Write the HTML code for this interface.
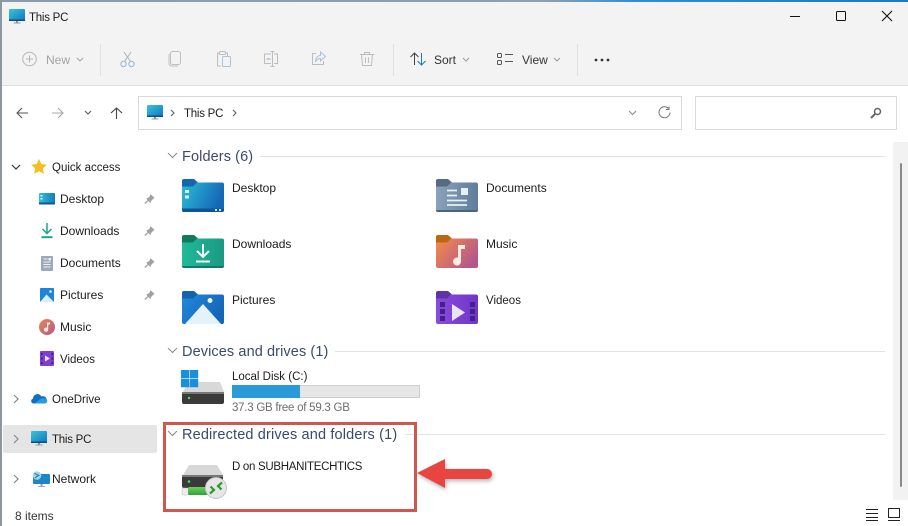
<!DOCTYPE html>
<html><head><meta charset="utf-8">
<style>
html,body{margin:0;padding:0}
body{width:908px;height:526px;position:relative;overflow:hidden;background:#fff;font-family:"Liberation Sans",sans-serif;color:#1c1c1c}
.t{position:absolute;white-space:nowrap;font-size:12px;line-height:14px}
.n{font-size:11.5px;letter-spacing:-.25px}
.h{position:absolute;white-space:nowrap;font-size:14.5px;line-height:16px;letter-spacing:.1px;color:#3a4a6b}
.l{position:absolute;height:1px;background:#e3e3e3}
svg{position:absolute;overflow:visible}
</style></head><body>
<div style="position:absolute;left:0;top:0;width:908px;height:85px;background:#f3f3f3"></div>
<div style="position:absolute;left:0;top:85px;width:908px;height:1px;background:#dedede"></div>
<div style="position:absolute;left:0;top:0;width:908px;height:2px;background:linear-gradient(90deg,#8a9bab 0,#8fa0b0 60%,#2f8fd0 70%,#1b78c8 100%)"></div>
<div style="position:absolute;left:0;top:0;width:1.5px;height:526px;background:#8f979e"></div>

<svg width="0" height="0" style="left:0;top:0"><defs>
<linearGradient id="m" x1="0" y1="0" x2="1" y2="1"><stop offset="0" stop-color="#38c6d8"/><stop offset="1" stop-color="#1275c4"/></linearGradient>
<linearGradient id="d" x1="0" y1="0" x2="1" y2="0"><stop offset="0" stop-color="#35c0d4"/><stop offset="1" stop-color="#157ac0"/></linearGradient>
<linearGradient id="mu" x1="0" y1="0" x2="1" y2="1"><stop offset="0" stop-color="#e8855a"/><stop offset="1" stop-color="#b25a80"/></linearGradient>
<linearGradient id="f1" x1="0" y1="0" x2="1" y2="0.300"><stop offset="0" stop-color="#2bbdd4"/><stop offset="1" stop-color="#1567b8"/></linearGradient>
<linearGradient id="f2" x1="0" y1="0" x2="1" y2="0"><stop offset="0" stop-color="#20ba9a"/><stop offset="1" stop-color="#1a9a82"/></linearGradient>
<linearGradient id="f3" x1="0" y1="0" x2="1" y2="0.500"><stop offset="0" stop-color="#2389da"/><stop offset="1" stop-color="#1566b6"/></linearGradient>
<linearGradient id="f4" x1="0" y1="0" x2="1" y2="0"><stop offset="0" stop-color="#8aa2ba"/><stop offset="1" stop-color="#5f7d9c"/></linearGradient>
<linearGradient id="f5" x1="0" y1="0" x2="1" y2="0.600"><stop offset="0" stop-color="#f58c48"/><stop offset="1" stop-color="#b4588a"/></linearGradient>
<linearGradient id="f6" x1="0" y1="0" x2="1" y2="0"><stop offset="0" stop-color="#8a4bdc"/><stop offset="1" stop-color="#6f36c8"/></linearGradient>
<linearGradient id="gr" x1="0" y1="0" x2="0" y2="1"><stop offset="0" stop-color="#6fd05a"/><stop offset="1" stop-color="#2fa03a"/></linearGradient>
</defs></svg>

<!-- title -->
<svg style="left:9px;top:9px" width="16" height="15" viewBox="0 0 16 15"><rect width="16" height="11.500" rx="1" fill="url(#m)"/><rect y="10.500" width="16" height="1.500" fill="#0b4f80"/><rect x="7" y="12" width="2" height="2" fill="#888"/><rect x="4.500" y="13.500" width="7" height="1" fill="#999"/></svg>
<div class="t n" style="left:29px;top:11px">This PC</div>
<svg style="left:790px;top:8px" width="106" height="16" fill="none" stroke="#111" stroke-width="1"><path d="M0 8.500h10"/><rect x="46.500" y="3.500" width="9" height="9" rx="1"/><path d="M92 3l10 10M102 3l-10 10" stroke-width="1.100"/></svg>

<!-- toolbar -->
<svg style="left:22px;top:52px" width="15" height="15" fill="none" stroke="#b5b5b5"><circle cx="7.500" cy="7" r="6.800"/><path d="M7.500 3.500v7M4 7h7"/></svg>
<div class="t" style="left:46px;top:53px;color:#a3a3a3">New</div>
<svg style="left:76px;top:57px" width="8" height="5" fill="none" stroke="#a5a5a5"><path d="M1 1l3 3 3-3"/></svg>
<div style="position:absolute;left:100px;top:44px;width:1px;height:32px;background:#e2e2e2"></div>
<svg style="left:120px;top:51px" width="15" height="17" fill="none" stroke="#8fb6d8"><circle cx="3.500" cy="13" r="2.700"/><circle cx="11.500" cy="13" r="2.700"/><path d="M4.500 10.500L11 1M10.500 10.500L4 1" stroke="#a8b4be"/></svg>
<svg style="left:168px;top:51px" width="14" height="16" fill="none" stroke="#c0c0c0"><rect x="2.500" y="0.500" width="10" height="13" rx="2"/><path d="M1 3v9c0 2 1 3 3 3h6"/></svg>
<svg style="left:216px;top:51px" width="15" height="16" fill="none" stroke="#bdbdbd"><path d="M4 2H1.500v13H5"/><path d="M9 2h2.500v3"/><rect x="3.500" y="0.500" width="6" height="3" rx="1"/><rect x="6.500" y="5.500" width="8" height="10" rx="1" stroke="#a9c3d8"/></svg>
<svg style="left:263px;top:51px" width="16" height="16" fill="none" stroke="#bdbdbd"><path d="M8 3H1.500v9.500H8M11 3h3.500v9.500H11"/><path d="M9.500 0.500v15M7.500 0.500h4M7.500 15.500h4"/><path d="M3.500 8h4" stroke="#a9c3d8" stroke-width="1.500"/></svg>
<svg style="left:311px;top:51px" width="16" height="16" fill="none" stroke="#bdbdbd"><path d="M5 2.500H1.500v11h11V10"/><path d="M9.500 1l5 4.500-5 4.500V7.500C7 7.500 5.500 8.500 4.500 11c0-4 2-6.500 5-6.500z" stroke="#a9c3d8"/></svg>
<svg style="left:360px;top:51px" width="14" height="16" fill="none" stroke="#bdbdbd"><path d="M0 3.500h14M4.500 3V1.500h5V3M1.500 3.500l1 11h9l1-11M5.500 6.500v5.500M8.500 6.500v5.500"/></svg>
<div style="position:absolute;left:393px;top:44px;width:1px;height:32px;background:#e2e2e2"></div>
<svg style="left:410px;top:52px" width="17" height="14" fill="none" stroke="#444"><path d="M4.500 13V1M0.500 5l4-4 4 4"/><path d="M11.500 1v12M7.500 9l4 4 4-4" stroke="#1578c2"/></svg>
<div class="t" style="left:434px;top:53px;color:#333">Sort</div>
<svg style="left:462px;top:57px" width="8" height="5" fill="none" stroke="#999"><path d="M1 1l3 3 3-3"/></svg>
<svg style="left:497px;top:53px" width="17" height="12" fill="none" stroke="#555"><rect x="0.500" y="0.500" width="4" height="4" rx="1"/><rect x="0.500" y="7.500" width="4" height="4" rx="1"/><path d="M8 1.500h8M8 8.500h8"/></svg>
<div class="t" style="left:522px;top:53px;color:#333">View</div>
<svg style="left:553px;top:57px" width="8" height="5" fill="none" stroke="#999"><path d="M1 1l3 3 3-3"/></svg>
<div style="position:absolute;left:577px;top:44px;width:1px;height:32px;background:#e2e2e2"></div>
<svg style="left:594px;top:58px" width="16" height="4" fill="#333"><circle cx="2" cy="2" r="1.400"/><circle cx="8" cy="2" r="1.400"/><circle cx="14" cy="2" r="1.400"/></svg>

<!-- nav -->
<svg style="left:16px;top:107px" width="13" height="12" fill="none" stroke="#555" stroke-width="1.100"><path d="M12 6H1M6 1L1 6l5 5"/></svg>
<svg style="left:51px;top:107px" width="13" height="12" fill="none" stroke="#a8a8a8" stroke-width="1.100"><path d="M1 6h11M7 1l5 5-5 5"/></svg>
<svg style="left:84px;top:110px" width="8" height="5" fill="none" stroke="#555"><path d="M1 1l3 3 3-3"/></svg>
<svg style="left:110px;top:107px" width="13" height="12" fill="none" stroke="#444" stroke-width="1.100"><path d="M6.500 12V1M1 6l5.500-5L12 6"/></svg>
<div style="position:absolute;left:138px;top:96px;width:544px;height:34px;border:1px solid #d9d9d9;box-sizing:border-box;background:#fff"></div>
<svg style="left:147px;top:105px" width="16" height="15" viewBox="0 0 16 15"><rect width="16" height="11.500" rx="1" fill="url(#m)"/><rect y="10.500" width="16" height="1.500" fill="#0b4f80"/><rect x="7" y="12" width="2" height="2" fill="#888"/><rect x="4.500" y="13.500" width="7" height="1" fill="#999"/></svg>
<svg style="left:170px;top:109px" width="5" height="8" fill="none" stroke="#666" stroke-width="1.200"><path d="M1 1l3 3-3 3"/></svg>
<div class="t n" style="left:184px;top:107px">This PC</div>
<svg style="left:232px;top:109px" width="5" height="8" fill="none" stroke="#666" stroke-width="1.200"><path d="M1 1l3 3-3 3"/></svg>
<svg style="left:628px;top:110px" width="9" height="6" fill="none" stroke="#888"><path d="M1 1l3.500 3.500L8 1"/></svg>
<svg style="left:658px;top:106px" width="13" height="13" fill="none" stroke="#777"><path d="M10.500 2.500A5.500 5.500 0 1 0 12 6.500M11 0.500v3H8"/></svg>
<div style="position:absolute;left:695px;top:96px;width:202px;height:34px;border:1px solid #d9d9d9;box-sizing:border-box;background:#fff"></div>
<svg style="left:870px;top:107px" width="12" height="12" fill="none" stroke="#666"><circle cx="7.500" cy="4.500" r="3" stroke-width="1.500"/><path d="M5 7l-4 4" stroke-width="2"/></svg>

<!-- sidebar -->
<svg style="left:11px;top:164px" width="10" height="7" fill="none" stroke="#333" stroke-width="1.200"><path d="M1 1l4 4 4-4"/></svg>
<svg style="left:31px;top:159px" width="16" height="15"><path d="M8 0l2.400 5 5.400.7-4 3.700 1.100 5.400L8 12.200 3.100 14.800l1.100-5.400-4-3.700L5.600 5z" fill="#f7be22"/></svg>
<div class="t" style="left:52px;top:161px;font-size:11.5px">Quick access</div>
<svg style="left:39px;top:193px" width="16" height="12"><rect width="16" height="11.500" rx="1" fill="url(#d)"/><rect y="9.500" width="16" height="2" fill="#0c5a94"/><rect x="1.500" y="2" width="2" height="1.500" fill="#d7f5fa"/><rect x="1.500" y="5" width="2" height="1.500" fill="#d7f5fa"/></svg>
<div class="t" style="left:60px;top:192px">Desktop</div>
<svg style="left:40px;top:223px" width="14" height="16" fill="none" stroke="#1aa587" stroke-width="1.500"><path d="M7 0v10M2.500 6L7 10.500 11.500 6"/><path d="M1.500 14.200h11" stroke-width="2"/></svg>
<div class="t" style="left:60px;top:224px">Downloads</div>
<svg style="left:41px;top:256px" width="12" height="15"><rect width="12" height="15" rx="1" fill="#9aaaba"/><path d="M2.500 3h4M2.500 6h7M2.500 8.500h7M2.500 11h7" stroke="#eef2f5"/><rect x="7.500" y="2" width="2.500" height="2.500" fill="#eef2f5"/></svg>
<div class="t" style="left:60px;top:256px">Documents</div>
<svg style="left:40px;top:288px" width="14" height="14"><rect width="14" height="14" rx="1" fill="#1d84d8"/><path d="M0 14L6.500 6.500 14 14z" fill="#d8eefb"/><circle cx="10.500" cy="3.500" r="1.300" fill="#e8f6ff"/></svg>
<div class="t" style="left:60px;top:288px">Pictures</div>
<svg style="left:39px;top:319px" width="16" height="16"><circle cx="8" cy="8" r="8" fill="url(#mu)"/><path d="M8 3.500h3V5.500H9.200V10.500A2.200 2.200 0 1 1 8 8.700z" fill="#f5e8e4"/></svg>
<div class="t" style="left:60px;top:320px">Music</div>
<svg style="left:40px;top:351px" width="14" height="15"><rect width="14" height="15" rx="1" fill="#7d3fd0"/><path d="M5 4.500l5 3-5 3z" fill="#ece0fa"/><path d="M1 2h1.500v2H1zM1 6.500h1.500v2H1zM1 11h1.500v2H1zM11.500 2H13v2h-1.500zM11.500 6.500H13v2h-1.500zM11.500 11H13v2h-1.500z" fill="#3d1d80"/></svg>
<div class="t" style="left:60px;top:353px;font-size:11.5px">Videos</div>
<svg style="left:144px;top:194px" width="11" height="10"><path d="M6.500 0L10.500 4 9 5 7 7 6.500 9 2 4.500 4 4 6 2z" fill="#a0a0a0"/><path d="M4 6.500L.8 9.500" stroke="#a0a0a0" stroke-width="1.200"/></svg>
<svg style="left:144px;top:226px" width="11" height="10"><path d="M6.500 0L10.500 4 9 5 7 7 6.500 9 2 4.500 4 4 6 2z" fill="#a0a0a0"/><path d="M4 6.500L.8 9.500" stroke="#a0a0a0" stroke-width="1.200"/></svg>
<svg style="left:144px;top:258px" width="11" height="10"><path d="M6.500 0L10.500 4 9 5 7 7 6.500 9 2 4.500 4 4 6 2z" fill="#a0a0a0"/><path d="M4 6.500L.8 9.500" stroke="#a0a0a0" stroke-width="1.200"/></svg>
<svg style="left:144px;top:290px" width="11" height="10"><path d="M6.500 0L10.500 4 9 5 7 7 6.500 9 2 4.500 4 4 6 2z" fill="#a0a0a0"/><path d="M4 6.500L.8 9.500" stroke="#a0a0a0" stroke-width="1.200"/></svg>

<svg style="left:13px;top:394px" width="6" height="10" fill="none" stroke="#888" stroke-width="1.200"><path d="M1 1l4 4-4 4"/></svg>
<svg style="left:31px;top:393px" width="16" height="11"><path d="M2.500 10.500A2.500 2.500 0 0 1 2 5.600 4.500 4.500 0 0 1 10.500 3.500 3.500 3.500 0 0 1 13.500 10.500z" fill="#1070c4"/><path d="M4 10.500h9.500a2.500 2.500 0 0 0 .5-5c-3-1-5 1-7 2z" fill="#2a9ae0"/></svg>
<div class="t" style="left:52px;top:393px;font-size:11.5px">OneDrive</div>

<div style="position:absolute;left:3px;top:425px;width:154px;height:28px;background:#e5e5e5;border-radius:2px"></div>
<svg style="left:13px;top:434px" width="6" height="10" fill="none" stroke="#888" stroke-width="1.200"><path d="M1 1l4 4-4 4"/></svg>
<svg style="left:31px;top:431px" width="16" height="15" viewBox="0 0 16 15"><rect width="16" height="11.500" rx="1" fill="url(#m)"/><rect y="10.500" width="16" height="1.500" fill="#0b4f80"/><rect x="7" y="12" width="2" height="2" fill="#888"/><rect x="4.500" y="13.500" width="7" height="1" fill="#999"/></svg>
<div class="t n" style="left:52px;top:433px">This PC</div>

<svg style="left:13px;top:474px" width="6" height="10" fill="none" stroke="#888" stroke-width="1.200"><path d="M1 1l4 4-4 4"/></svg>
<svg style="left:32px;top:471px" width="18" height="16"><rect x="1" y="3" width="17" height="10" rx="1" fill="#1c86c6"/><circle cx="5" cy="4.500" r="4.300" fill="#9ed6ef"/><path d="M2.500 2.500c2 .5 3 2 5 2M3 7c1-1.500 2-1 4-3" stroke="#1a6ea8" fill="none"/><rect x="8.500" y="13" width="2" height="2" fill="#999"/><rect x="6" y="15" width="7" height="1" fill="#aaa"/></svg>
<div class="t" style="left:52px;top:472px">Network</div>
<div class="t" style="left:15px;top:509px;color:#333">8 items</div>

<!-- content headers -->
<svg style="left:167px;top:152px" width="11" height="7" fill="none" stroke="#8a8a8a"><path d="M1 1l4.500 4.500L10 1"/></svg>
<div class="h" style="left:182px;top:149px">Folders (6)</div>
<div class="l" style="left:260px;top:156px;width:625px"></div>
<svg style="left:167px;top:347px" width="11" height="7" fill="none" stroke="#8a8a8a"><path d="M1 1l4.500 4.500L10 1"/></svg>
<div class="h" style="left:182px;top:344px">Devices and drives (1)</div>
<div class="l" style="left:335px;top:351px;width:550px"></div>
<svg style="left:167px;top:430px" width="11" height="7" fill="none" stroke="#8a8a8a"><path d="M1 1l4.500 4.500L10 1"/></svg>
<div class="h" style="left:182px;top:427px;letter-spacing:.15px">Redirected drives and folders (1)</div>
<div class="l" style="left:405px;top:434px;width:480px"></div>

<!-- folders -->
<svg style="left:182px;top:179px" width="42" height="33"><path d="M0 9V2a2 2 0 0 1 2-2h10l4 3.500V9z" fill="#1565b0"/><path d="M0 7.500H11L15 3.500H40a2 2 0 0 1 2 2V31a2 2 0 0 1-2 2H2a2 2 0 0 1-2-2z" fill="url(#f1)"/><path d="M0 29.500h42V31a2 2 0 0 1-2 2H2a2 2 0 0 1-2-2z" fill="#0e5596"/><rect x="3" y="11" width="4" height="3" fill="#d5f3f8"/><rect x="3" y="16.500" width="4" height="3" fill="#d5f3f8"/><rect x="33" y="30" width="2" height="2" fill="#cfeaf6"/><rect x="37" y="30" width="2" height="2" fill="#cfeaf6"/></svg>

<svg style="left:182px;top:235px" width="42" height="33"><path d="M0 9V2a2 2 0 0 1 2-2h10l4 3.500V9z" fill="#127a5c"/><path d="M0 7.500H11L15 3.500H40a2 2 0 0 1 2 2V31a2 2 0 0 1-2 2H2a2 2 0 0 1-2-2z" fill="url(#f2)"/><path d="M0 31h42a2 2 0 0 1-2 2H2a2 2 0 0 1-2-2z" fill="#137a68"/><path d="M21 9v13M15 16l6 6 6-6" stroke="#f2fbf8" stroke-width="2" fill="none"/><path d="M14 26.500h14" stroke="#f2fbf8" stroke-width="2"/></svg>

<svg style="left:182px;top:291px" width="42" height="33"><path d="M0 9V2a2 2 0 0 1 2-2h10l4 3.500V9z" fill="#1262b0"/><path d="M0 7.500H11L15 3.500H40a2 2 0 0 1 2 2V31a2 2 0 0 1-2 2H2a2 2 0 0 1-2-2z" fill="url(#f3)"/><path d="M3 33L21 13l18 20z" fill="#e3f3fb"/><circle cx="28" cy="9.500" r="2.500" fill="#eaf7fe"/></svg>

<svg style="left:436px;top:179px" width="42" height="33"><path d="M0 9V2a2 2 0 0 1 2-2h10l4 3.500V9z" fill="#566a80"/><path d="M0 7.500H11L15 3.500H40a2 2 0 0 1 2 2V31a2 2 0 0 1-2 2H2a2 2 0 0 1-2-2z" fill="url(#f4)"/><path d="M0 31h42a2 2 0 0 1-2 2H2a2 2 0 0 1-2-2z" fill="#4a6480"/><path d="M11 11.500h10M11 16.500h10M11 21.500h20M11 26h20" stroke="#e9f0f5" stroke-width="1.800"/><rect x="25" y="9" width="7" height="7" fill="#e9f0f5"/></svg>

<svg style="left:436px;top:235px" width="42" height="33"><path d="M0 9V2a2 2 0 0 1 2-2h10l4 3.500V9z" fill="#bd6614"/><path d="M0 7.500H11L15 3.500H40a2 2 0 0 1 2 2V31a2 2 0 0 1-2 2H2a2 2 0 0 1-2-2z" fill="url(#f5)"/><path d="M22 10h7v4h-4v12.500a4 4 0 1 1-3-3.800z" fill="#fcecdf"/></svg>

<svg style="left:436px;top:291px" width="42" height="33"><path d="M0 9V2a2 2 0 0 1 2-2h10l4 3.500V9z" fill="#5f34a8"/><path d="M0 7.500H11L15 3.500H40a2 2 0 0 1 2 2V31a2 2 0 0 1-2 2H2a2 2 0 0 1-2-2z" fill="url(#f6)"/><path d="M16 13l13 8.500L16 30z" fill="#e6e6f5"/><path d="M4 11h5v5H4zM4 18h5v5H4zM4 25h5v5H4zM34 11h5v5h-5zM34 18h5v5h-5zM34 25h5v5h-5z" fill="#42218c"/></svg>

<div class="t" style="left:232px;top:181px">Desktop</div>
<div class="t" style="left:232px;top:237px">Downloads</div>
<div class="t" style="left:232px;top:293px">Pictures</div>
<div class="t" style="left:486px;top:181px">Documents</div>
<div class="t" style="left:486px;top:237px">Music</div>
<div class="t" style="left:486px;top:294px;font-size:11.5px">Videos</div>

<!-- Local disk -->
<svg style="left:181px;top:370px" width="44" height="35"><path d="M7 12h32l4 10H2z" fill="#d8d8d8"/><rect x="1" y="22" width="42" height="12" rx="2" fill="#3a3a3a"/><rect x="1" y="22" width="42" height="2" fill="#777"/><circle cx="8" cy="28" r="1.200" fill="#55d860"/><path d="M0 0h8.300v8.300H0zM8.900 0h8.300v8.300H8.900zM0 8.900h8.300v8.300H0zM8.900 8.900h8.300v8.300H8.900z" fill="#1a90dc"/></svg>
<div class="t" style="left:232px;top:370px;font-size:11.5px">Local Disk (C:)</div>
<div style="position:absolute;left:232px;top:385px;width:188px;height:13px;background:#e6e6e6;border:1px solid #cfcfcf;box-sizing:border-box"></div>
<div style="position:absolute;left:232px;top:385px;width:68px;height:13px;background:#2a9ad8"></div>
<div class="t n" style="left:232px;top:401px;color:#6d6d6d">37.3 GB free of 59.3 GB</div>

<!-- Redirected -->
<svg style="left:182px;top:464px" width="46" height="35"><path d="M7 1h28l6 10H1z" fill="#d8d8d8"/><rect x="0" y="11" width="41" height="13" rx="2" fill="#3a3a3a"/><rect x="0" y="11" width="41" height="2" fill="#777"/><circle cx="7" cy="17.500" r="1.300" fill="#55d860"/><rect x="0" y="24" width="7" height="7" rx="1.500" fill="#ececec" stroke="#bbb" stroke-width=".5"/><rect x="6" y="23" width="22" height="8" rx="1.500" fill="url(#gr)"/><circle cx="34" cy="24" r="10.500" fill="#e6e6e6" stroke="#c4c4c4"/><path d="M28.500 22.500L32 26l-4 3.500M40 18.500L36 22l3.500 3.500" stroke="#2d9a2d" stroke-width="2.200" fill="none"/></svg>
<div class="t" style="left:232px;top:460px;font-size:11.5px;letter-spacing:-.3px">D on SUBHANITECHTICS</div>

<div style="position:absolute;left:163px;top:422px;width:254px;height:90px;border:3px solid #cf5750;box-sizing:border-box"></div>

<!-- arrow -->
<svg style="left:415px;top:459px;filter:drop-shadow(1px 2px 2px rgba(0,0,0,.3))" width="80" height="32"><path d="M2 14L30 0V10H72a5 5 0 0 1 0 10H30v9z" fill="#e94540"/></svg>

<!-- scrollbar -->
<div style="position:absolute;left:893px;top:142px;width:15px;height:358px;background:#f2f2f2"></div>
<div style="position:absolute;left:900px;top:163px;width:2px;height:324px;background:#8a8a8a;border-radius:1px"></div>

<!-- status view icons -->
<svg style="left:866px;top:508px" width="38" height="14" fill="none" stroke="#222"><path d="M0 1.500h12M0 5.500h12M0 9.500h12M0 12.500h12"/><rect x="22.500" y="0.500" width="11" height="9"/><path d="M22 12.500h12"/></svg>
</body></html>
